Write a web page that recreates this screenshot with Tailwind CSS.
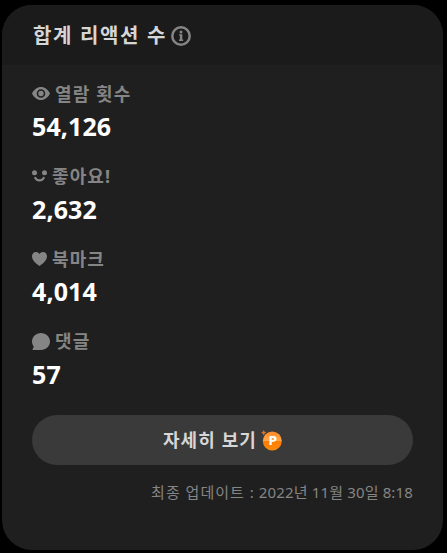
<!DOCTYPE html>
<html lang="ko">
<head>
    <meta charset="UTF-8">
    <meta name="viewport" content="width=device-width, initial-scale=1.0">
    <title>합계 리액션 수</title>
    <script src="https://cdn.jsdelivr.net/npm/@tailwindcss/browser@4"></script>
</head>
<body class="bg-black font-['Noto_Sans','Noto_Sans_CJK_KR',sans-serif]">
    <div class="h-[553px] pt-[5px] pr-1 pb-[3px] pl-0.5">
        <section class="h-full rounded-[30px] bg-[#1f1f1f] overflow-hidden">
            <header class="h-[60px] pl-[31px] pr-[30px] pt-px flex items-center gap-1 bg-[#1b1b1b]">
                <h2 class="text-[20px] leading-none font-bold tracking-[1.65px] text-[#d6d6d6] whitespace-nowrap">합계 리액션 수</h2>
                <svg class="size-5 shrink-0" viewBox="0 0 20 20" fill="none">
                    <circle cx="10" cy="10" r="8.7" stroke="#858585" stroke-width="2.5"/>
                    <circle cx="10" cy="5.900" r="1.500" fill="#858585"/>
                    <path d="M8 8.200h3.300v5.400h.9V15H8v-1.400h.9V9.600H8z" fill="#858585"/>
                </svg>
            </header>

            <dl class="px-[30px] pt-[12px] flex flex-col gap-[14.5px]">
                <div>
                    <dt class="h-[33px] flex items-center gap-[5px] text-[18px] leading-none font-bold tracking-[1.1px] text-[#858585]">
                        <svg class="w-[18px] h-[13px] shrink-0" viewBox="0 0 18 13">
                            <path fill="#858585" fill-rule="evenodd" d="M0 6.500C2 2.400 5.200 0 9 0s7 2.400 9 6.500c-2 4.100-5.200 6.500-9 6.500S2 10.600 0 6.500zM9 2.200a4.300 4.300 0 1 0 0 8.600 4.300 4.300 0 0 0 0-8.600z"/>
                            <circle cx="9" cy="6.500" r="2.700" fill="#858585"/>
                        </svg>
                        열람 횟수
                    </dt>
                    <dd class="h-[35px] pb-0.5 flex items-center text-[25px] leading-none font-bold tracking-[0.1px] text-white">54,126</dd>
                </div>
                <div>
                    <dt class="h-[33px] flex items-center gap-[5px] text-[18px] leading-none font-bold tracking-[1.1px] text-[#858585]">
                        <svg class="w-[15px] h-3 shrink-0" viewBox="0 0 15 12">
                            <circle cx="2.500" cy="2.700" r="2.500" fill="#858585"/>
                            <circle cx="12.500" cy="2.700" r="2.500" fill="#858585"/>
                            <path d="M3.300 8c1.900 3.200 6.500 3.200 8.400 0" fill="none" stroke="#858585" stroke-width="2.300" stroke-linecap="round"/>
                        </svg>
                        좋아요!
                    </dt>
                    <dd class="h-[35px] pb-0.5 flex items-center text-[25px] leading-none font-bold tracking-[0.1px] text-white">2,632</dd>
                </div>
                <div>
                    <dt class="h-[33px] flex items-center gap-[5px] text-[18px] leading-none font-bold tracking-[1.1px] text-[#858585]">
                        <svg class="w-[15px] h-[14px] shrink-0" viewBox="0 0 15 14">
                            <path fill="#858585" d="M7.500 14C4 11.800 0 8.300 0 4.300 0 1.800 1.800 0 4 0c1.500 0 2.800.8 3.500 2.100C8.200.8 9.500 0 11 0c2.200 0 4 1.800 4 4.300 0 4-4 7.500-7.500 9.700z"/>
                        </svg>
                        북마크
                    </dt>
                    <dd class="h-[35px] pb-0.5 flex items-center text-[25px] leading-none font-bold tracking-[0.1px] text-white">4,014</dd>
                </div>
                <div>
                    <dt class="h-[33px] flex items-center gap-[5px] text-[18px] leading-none font-bold tracking-[1.1px] text-[#858585]">
                        <svg class="w-[18px] h-[17px] shrink-0" viewBox="0 0 18 17">
                            <path fill="#858585" d="M9 0c5 0 9 3.800 9 8.500S14 17 9 17H1.200c-.6 0-.8-.5-.5-1l1.100-2.300C.7 12.300 0 10.500 0 8.500 0 3.800 4 0 9 0z"/>
                        </svg>
                        댓글
                    </dt>
                    <dd class="h-[35px] pb-0.5 flex items-center text-[25px] leading-none font-bold tracking-[0.1px] text-white">57</dd>
                </div>
            </dl>

            <div class="px-[30px] pt-[22.5px]">
                <button type="button" class="w-full h-[50px] rounded-full bg-[#3a3a3a] flex items-center justify-center gap-1 text-[18px] leading-none font-bold tracking-[1.1px] text-[#d6d6d6]">
                    자세히 보기
                    <svg class="size-[21px] shrink-0" viewBox="0 0 21 21">
                        <defs>
                            <linearGradient id="coin" x1="0" y1="0" x2="0" y2="1">
                                <stop offset="0" stop-color="#ff8a26"/>
                                <stop offset=".48" stop-color="#ffa64d"/>
                                <stop offset=".52" stop-color="#ff7d00"/>
                                <stop offset="1" stop-color="#ff8a0a"/>
                            </linearGradient>
                        </defs>
                        <circle cx="11.300" cy="11" r="9.500" fill="url(#coin)"/>
                        <path fill="#d9761f" d="M2.700 0l.9 1.800 1.800.9-1.800.9-.9 1.800-.9-1.800L0 2.700l1.800-.9z"/>
                        <text x="11.800" y="14.900" text-anchor="middle" fill="#fff" font-family="DejaVu Sans" font-weight="700" font-size="11.500" letter-spacing="0">P</text>
                    </svg>
                </button>
                <p class="mt-[18px] text-right text-[15px] leading-[18px] tracking-[0.15px] text-[#858585] whitespace-nowrap"><span class="tracking-[1px]">최종 업데이트 :</span> 2022년 11월 30일 8:18</p>
            </div>
        </section>
    </div>
</body>
</html>
